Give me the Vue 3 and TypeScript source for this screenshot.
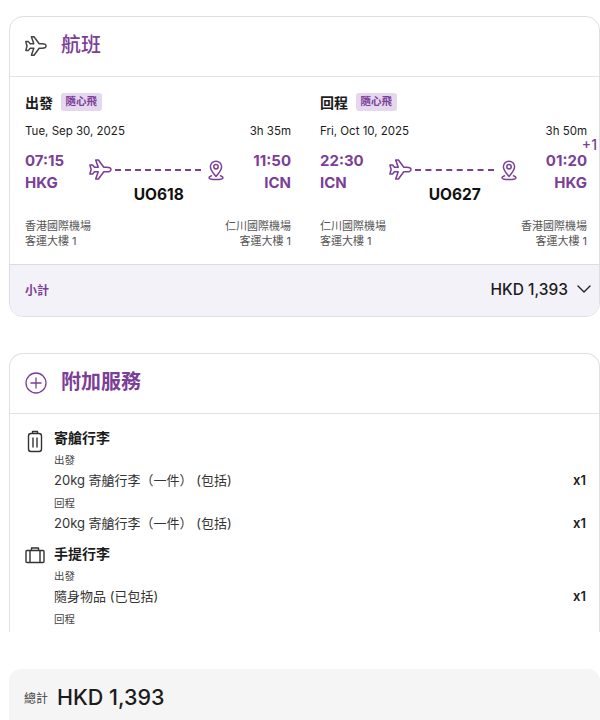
<script setup lang="ts">
interface Leg {
  title: string
  date: string
  duration: string
  dep: string
  arr: string
  from: string
  to: string
  flight: string
  fromName: string
  toName: string
  nextDay?: boolean
}

const legs: Leg[] = [
  { title: '出發', date: 'Tue, Sep 30, 2025', duration: '3h 35m', dep: '07:15', arr: '11:50', from: 'HKG', to: 'ICN', flight: 'UO618', fromName: '香港國際機場', toName: '仁川國際機場' },
  { title: '回程', date: 'Fri, Oct 10, 2025', duration: '3h 50m', dep: '22:30', arr: '01:20', from: 'ICN', to: 'HKG', flight: 'UO627', fromName: '仁川國際機場', toName: '香港國際機場', nextDay: true },
]

const planePath = 'M22 12c0-1.200-1.800-2.200-3.800-2.200h-3L10 2.800H7.400l2.400 7H6.200L4.400 7.600H1.800L3 12l-1.200 4.400h2.600l1.800-2.200h3.600l-2.400 7H10l5.200-7h3c2 0 3.800-1 3.800-2.200z'
</script>

<template>
  <div class="page">
    <section class="card">
      <header class="card-head">
        <svg class="head-icon" viewBox="0 0 24 24" fill="none" stroke="#444" stroke-width="1.500" stroke-linejoin="round">
          <path :d="planePath" />
        </svg>
        <h2>航班</h2>
      </header>
      <div class="legs">
        <div v-for="leg in legs" :key="leg.flight" class="leg">
          <div class="leg-title">
            <strong>{{ leg.title }}</strong>
            <span class="badge">隨心飛</span>
          </div>
          <div class="leg-date">
            <span>{{ leg.date }}</span>
            <span>{{ leg.duration }}</span>
          </div>
          <div class="route">
            <div class="port">
              <b>{{ leg.dep }}</b>
              <b>{{ leg.from }}</b>
            </div>
            <div class="track">
              <div class="track-line">
                <svg class="track-plane" viewBox="0 0 24 24" fill="none" stroke="#7b3f98" stroke-width="1.500" stroke-linejoin="round">
                  <path :d="planePath" />
                </svg>
                <span class="dashes"></span>
                <svg class="track-pin" viewBox="0 0 24 24" fill="none" stroke="#7b3f98" stroke-width="1.500" stroke-linecap="round" stroke-linejoin="round">
                  <path d="M12 18.500c-3-3.400-5.600-6.400-5.600-9.700a5.600 5.600 0 0 1 11.200 0c0 3.300-2.600 6.300-5.600 9.700z" />
                  <circle cx="12" cy="8.800" r="2.200" />
                  <path d="M7.500 17.800c-1.500.5-2.500 1.100-2.500 1.900 0 1 3 1.800 7 1.800s7-.8 7-1.800c0-.8-1-1.400-2.500-1.900" />
                </svg>
              </div>
              <div class="flight-no">{{ leg.flight }}</div>
            </div>
            <div class="port port-end">
              <span v-if="leg.nextDay" class="next-day">+1</span>
              <b>{{ leg.arr }}</b>
              <b>{{ leg.to }}</b>
            </div>
          </div>
          <div class="airports">
            <div>
              <p>{{ leg.fromName }}</p>
              <p>客運大樓 1</p>
            </div>
            <div class="airport-end">
              <p>{{ leg.toName }}</p>
              <p>客運大樓 1</p>
            </div>
          </div>
        </div>
      </div>
      <footer class="subtotal">
        <span class="subtotal-label">小計</span>
        <span class="subtotal-price">
          HKD 1,393
          <svg viewBox="0 0 16 16" fill="none" stroke="#222" stroke-width="1.400" stroke-linecap="round" stroke-linejoin="round">
            <path d="M2 5l6 6 6-6" />
          </svg>
        </span>
      </footer>
    </section>

    <section class="card card-extras">
      <header class="card-head">
        <svg class="head-icon" viewBox="0 0 24 24" fill="none" stroke="#7b3f98" stroke-width="1.300">
          <circle cx="12" cy="12" r="10" />
          <path d="M12 6.500v11M6.500 12h11" />
        </svg>
        <h2 class="heading-strong">附加服務</h2>
      </header>
      <div class="extras">
        <div class="extra-group">
          <svg class="extra-icon" viewBox="0 0 20 24" fill="none" stroke="#333" stroke-width="1.400" stroke-linejoin="round">
            <rect x="3.500" y="3.500" width="13" height="18" rx="2.500" />
            <path d="M7.500 3.500V1.500h5v2M8 7.500v10M12 7.500v10" />
          </svg>
          <div class="extra-body">
            <h3>寄艙行李</h3>
            <div class="extra-dir">出發</div>
            <div class="extra-row"><span>20kg 寄艙行李（一件） (包括)</span><b>x1</b></div>
            <div class="extra-dir">回程</div>
            <div class="extra-row"><span>20kg 寄艙行李（一件） (包括)</span><b>x1</b></div>
          </div>
        </div>
        <div class="extra-group">
          <svg class="extra-icon" viewBox="0 0 20 24" fill="none" stroke="#333" stroke-width="1.400" stroke-linejoin="round">
            <rect x="1" y="4.500" width="18" height="12" rx="1" />
            <path d="M6.500 4.500V2h7v2.500M5 4.500v12M15 4.500v12" />
          </svg>
          <div class="extra-body">
            <h3>手提行李</h3>
            <div class="extra-dir">出發</div>
            <div class="extra-row"><span>隨身物品 (已包括)</span><b>x1</b></div>
            <div class="extra-dir">回程</div>
          </div>
        </div>
      </div>
    </section>

    <div class="total">
      <span class="total-label">總計</span>
      <span class="total-price">HKD 1,393</span>
    </div>
  </div>
</template>

<style>
html, body {
  margin: 0;
  height: 720px;
  overflow: hidden;
  background: #fff;
}
</style>

<style scoped>
.page {
  height: 720px;
  overflow: hidden;
  box-sizing: border-box;
  padding: 16px 0 0 9px;
  font-family: Inter, "Noto Sans CJK TC", sans-serif;
  color: #1c1c1c;
}

p, h2, h3 {
  margin: 0;
}

.card {
  border: 1px solid #dfdfe3;
  border-radius: 14px;
  overflow: hidden;
  height: 301px;
  box-sizing: border-box;
}

.card-head {
  height: 60px;
  box-sizing: border-box;
  display: flex;
  align-items: center;
  gap: 13px;
  padding: 0 0 7px 14px;
  border-bottom: 1px solid #e3e3e6;
}

.card-head h2 {
  font-size: 20px;
  font-weight: 500;
  color: #7b3f98;
}

.card-head .heading-strong {
  font-weight: 700;
}

.head-icon {
  width: 24px;
  height: 24px;
  flex: none;
  margin-top: 5px;
}

.legs {
  height: 188px;
  box-sizing: border-box;
  display: grid;
  grid-template-columns: 266px 267px;
  column-gap: 29px;
  padding: 16px 0 0 15px;
  border-bottom: 1px solid #dcdce0;
}

.leg-title {
  display: flex;
  align-items: center;
  gap: 8px;
  height: 18px;
  font-size: 14px;
}

.badge {
  font-size: 10.500px;
  font-weight: 700;
  color: #7b3f98;
  background: #e4d7ee;
  border-radius: 3px;
  padding: 0 4.500px;
  height: 18px;
  line-height: 18px;
}

.leg-date {
  display: flex;
  justify-content: space-between;
  margin-top: 12px;
  font-size: 11.500px;
  line-height: 16px;
}

.route {
  display: flex;
  justify-content: space-between;
  margin-top: 14px;
}

.port {
  position: relative;
  display: flex;
  flex-direction: column;
  gap: 6px;
  font-size: 15px;
  line-height: 16px;
  color: #7b3f98;
}

.port-end {
  align-items: flex-end;
}

.next-day {
  position: absolute;
  top: -16px;
  right: -10px;
  font-size: 14px;
  font-weight: 500;
}

.track {
  flex: 1;
  display: flex;
  flex-direction: column;
  align-items: center;
  padding-top: 4px;
}

.track-line {
  display: flex;
  align-items: center;
  gap: 2px;
  align-self: stretch;
  margin: 0 25px 0 24px;
}

.track-plane {
  width: 25px;
  height: 25px;
  flex: none;
}

.track-pin {
  width: 24px;
  height: 24px;
  margin-left: 1px;
  flex: none;
}

.dashes {
  flex: 1;
  border-top: 2px dashed #7b3f98;
}

.flight-no {
  font-size: 15.500px;
  font-weight: 700;
  line-height: 18px;
  color: #111;
  margin-top: 4px;
}

.airports {
  display: flex;
  justify-content: space-between;
  margin-top: 15px;
  font-size: 11px;
  line-height: 15px;
  color: #555;
}

.airport-end {
  text-align: right;
}

.subtotal {
  height: 51px;
  display: flex;
  align-items: center;
  justify-content: space-between;
  padding: 0 9px 3px 15px;
  width: 591px;
  box-sizing: border-box;
  background: #f3f2f8;
}

.subtotal-label {
  font-size: 12px;
  font-weight: 700;
  color: #7b3f98;
}

.subtotal-price {
  display: flex;
  align-items: center;
  gap: 8px;
  font-size: 15.500px;
  font-weight: 500;
}

.subtotal-price svg {
  width: 16px;
  height: 16px;
}

.card-extras {
  height: 279px;
  margin-top: 36px;
  border-bottom: none;
  border-radius: 14px 14px 0 0;
}

.extras {
  padding: 15px 13px 0 15px;
}

.extra-group {
  display: flex;
  gap: 9px;
}

.extra-icon {
  width: 20px;
  height: 24px;
  flex: none;
  margin-top: 1px;
}

.extra-body {
  flex: 1;
}

.extra-body h3 {
  font-size: 14px;
  font-weight: 600;
  line-height: 18px;
}

.extra-dir {
  font-size: 10.500px;
  line-height: 14px;
  margin-top: 7px;
  color: #444;
}

.extra-row + .extra-dir {
  margin-top: 8px;
}

.extra-row {
  display: flex;
  justify-content: space-between;
  font-size: 13px;
  line-height: 18px;
  margin-top: 3px;
  color: #333;
}

.extra-row b {
  font-weight: 600;
  color: #1c1c1c;
}

.extra-group + .extra-group {
  margin-top: 13px;
}

.total {
  height: 60px;
  margin-top: 37px;
  display: flex;
  align-items: center;
  gap: 9px;
  padding: 0 0 4px 15px;
  box-sizing: border-box;
  background: #f5f5f5;
  border-radius: 12px 12px 0 0;
}

.total-label {
  font-size: 12px;
  color: #444;
}

.total-price {
  font-size: 21.500px;
  font-weight: 500;
}
</style>
